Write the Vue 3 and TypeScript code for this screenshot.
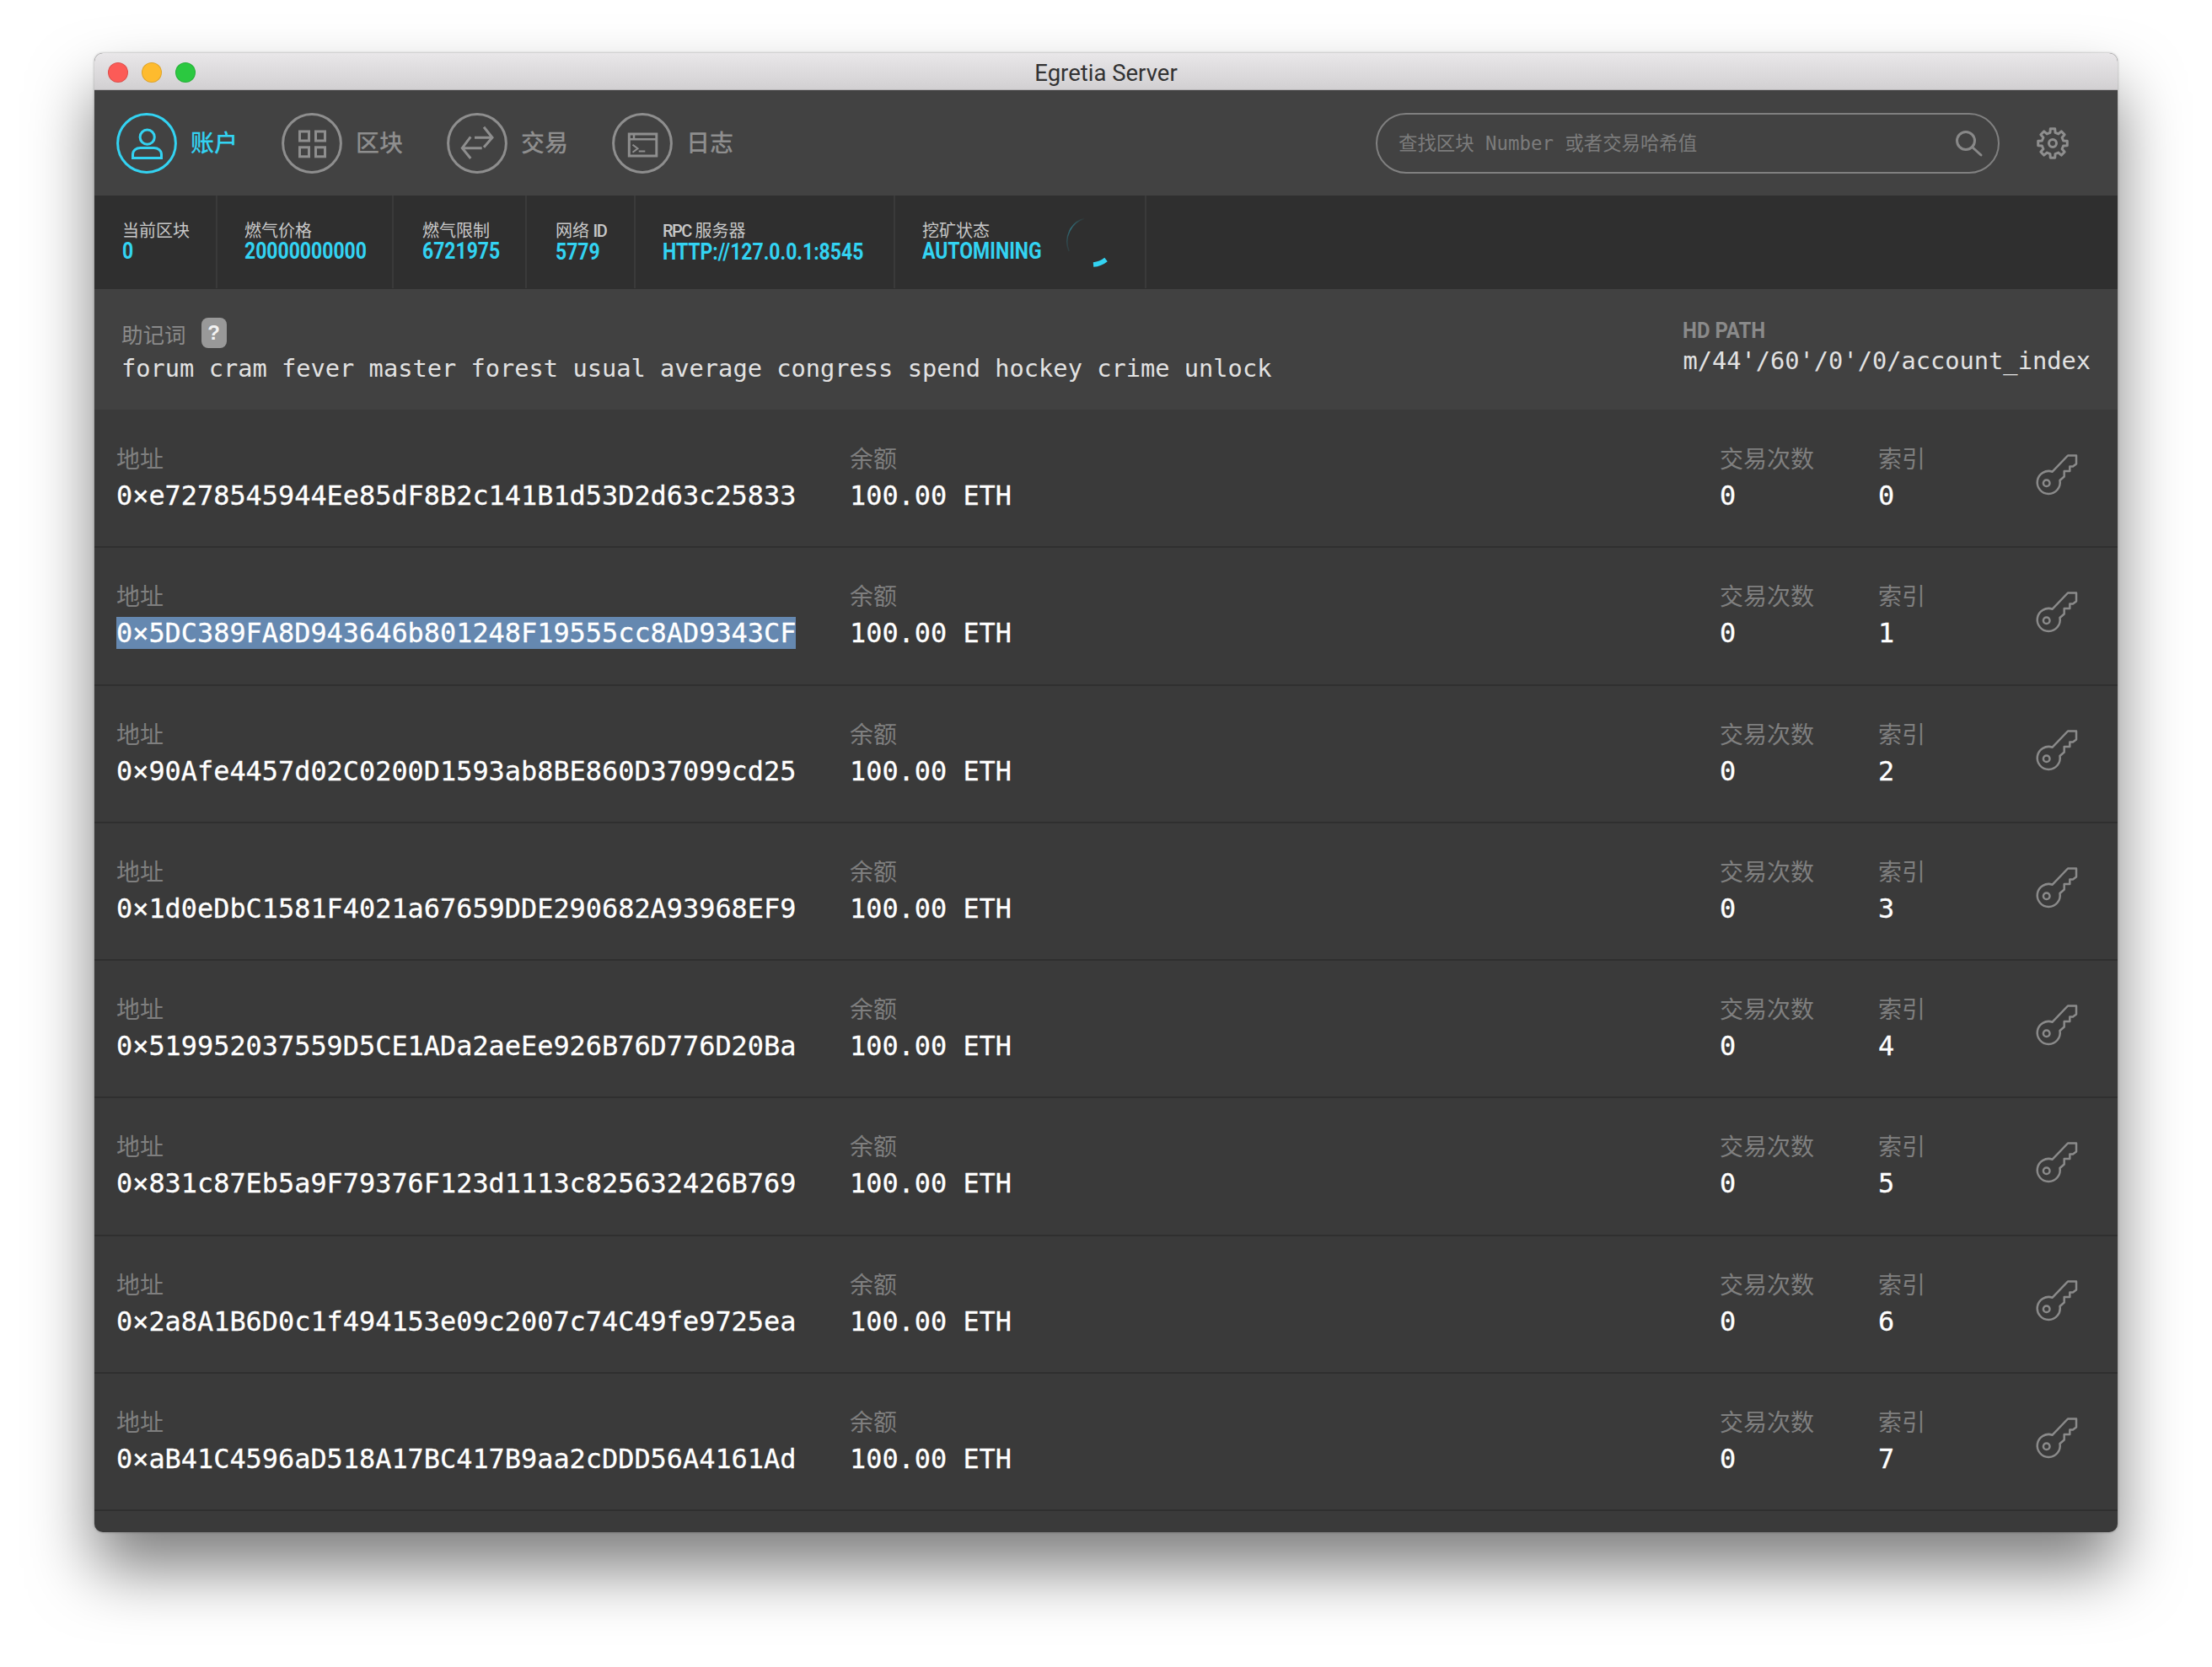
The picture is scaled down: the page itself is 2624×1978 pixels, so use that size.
<template>
  <div class="page">
    <div class="window">
      <div class="titlebar">
        <div class="lights">
          <span class="light red"></span>
          <span class="light yellow"></span>
          <span class="light green"></span>
        </div>
        <div class="title">Egretia Server</div>
      </div>

      <div class="toolbar">
        <nav class="nav">
          <a v-for="item in navItems" :key="item.label" class="nav-item" :class="{ active: item.active }">
            <svg class="nav-icon" viewBox="0 0 72 72" fill="none" stroke="currentColor" stroke-width="3">
              <circle cx="36" cy="36" r="34.400" />
              <template v-if="item.icon === 'user'">
                <circle cx="36.700" cy="28.700" r="8.600" />
                <path d="M19.500 53.500v-4c0-5 4-8 9-8h16c5 0 9 3 9 8v4z" />
              </template>
              <template v-else-if="item.icon === 'grid'">
                <rect x="21.500" y="22" width="11" height="11" />
                <rect x="40.500" y="22" width="11" height="11" />
                <rect x="21.500" y="40.800" width="11" height="11" />
                <rect x="40.500" y="40.800" width="11" height="11" />
              </template>
              <template v-else-if="item.icon === 'swap'">
                <path d="M33 29.300h21M44 16.700l10 12.600-10 11.400" />
                <path d="M41.700 41.700H18.300M28.300 28.300l-10 13.400 10 12.300" />
              </template>
              <template v-else>
                <rect x="20.300" y="25" width="32.500" height="26" stroke-width="3" />
                <path d="M20.300 31.300h32.500M26 25v6.300" stroke-width="2.500" />
                <path d="M24.500 37.700l6 4.500-6 4.500M31.700 45.500h7.600" stroke-width="2" />
              </template>
            </svg>
            <span class="nav-label">{{ item.label }}</span>
          </a>
        </nav>
        <div class="search">
          <input class="search-input" placeholder="查找区块 Number 或者交易哈希值" />
          <svg class="search-icon" viewBox="0 0 36 36" fill="none" stroke="currentColor" stroke-width="3">
            <circle cx="14" cy="14" r="10.500" />
            <path d="M21.500 21.500L32 31" stroke-linecap="round" />
          </svg>
        </div>
        <svg class="gear" viewBox="0 0 40 40" fill="none" stroke="currentColor" stroke-width="3">
          <path :d="gearPath" stroke-linejoin="round" />
          <circle cx="20" cy="20" r="4.500" />
        </svg>
      </div>

      <div class="stats">
        <div v-for="stat in stats" :key="stat.label" class="stat">
          <div class="stat-text">
            <div class="stat-label">
              <span v-for="part in labelParts(stat.label)" :key="part" :class="{ latin: isLatin(part) }">{{ part }}</span>
            </div>
            <div class="stat-value">{{ stat.value }}</div>
          </div>
          <svg v-if="stat.spinner" class="spinner" viewBox="0 0 64 64" fill="none">
            <defs>
              <linearGradient id="spin-fade" x1="0" y1="1" x2="1" y2="0">
                <stop offset="0" stop-color="#33d3f2" stop-opacity="0.05" />
                <stop offset="0.45" stop-color="#33d3f2" stop-opacity="0.4" />
                <stop offset="1" stop-color="#33d3f2" stop-opacity="0" />
              </linearGradient>
            </defs>
            <path d="M5 43A29 29 0 0 1 24 4" stroke="url(#spin-fade)" stroke-width="1.500" />
            <path d="M34 59A27 27 0 0 0 49 53" stroke="#33d3f2" stroke-width="5.500" />
          </svg>
        </div>
      </div>

      <div class="mnemonic">
        <div class="mnemonic-left">
          <div class="mnemonic-label">
            <span>助记词</span>
            <span class="help">?</span>
          </div>
          <div class="mono-line">forum cram fever master forest usual average congress spend hockey crime unlock</div>
        </div>
        <div class="mnemonic-right">
          <div class="hd-label">HD PATH</div>
          <div class="mono-line path-line">m/44'/60'/0'/0/account_index</div>
        </div>
      </div>

      <div class="accounts">
        <div v-for="(address, index) in addresses" :key="address" class="account">
          <div class="cell">
            <div class="cell-label">地址</div>
            <div class="cell-value"><span :class="{ selected: index === 1 }">{{ address }}</span></div>
          </div>
          <div class="cell">
            <div class="cell-label">余额</div>
            <div class="cell-value">100.00 ETH</div>
          </div>
          <div class="cell">
            <div class="cell-label">交易次数</div>
            <div class="cell-value">0</div>
          </div>
          <div class="cell">
            <div class="cell-label">索引</div>
            <div class="cell-value">{{ index }}</div>
          </div>
          <svg class="key" viewBox="0 0 48 48" fill="none" stroke="currentColor" stroke-width="2.500">
            <path d="M17.700 20.700L36 1.500h10v10l-4 3h-3.700V20h-6.600v6.500l-5.200 4.500A13.500 13.500 0 1 1 17.700 20.700z" stroke-linejoin="round" />
            <circle cx="10.700" cy="34.300" r="3.800" />
          </svg>
        </div>
      </div>
    </div>
  </div>
</template>

<script setup lang="ts">
interface NavItem {
  label: string
  icon: 'user' | 'grid' | 'swap' | 'log'
  active?: boolean
}

interface Stat {
  label: string
  value: string
  spinner?: boolean
}

const navItems: NavItem[] = [
  { label: '账户', icon: 'user', active: true },
  { label: '区块', icon: 'grid' },
  { label: '交易', icon: 'swap' },
  { label: '日志', icon: 'log' }
]

const stats: Stat[] = [
  { label: '当前区块', value: '0' },
  { label: '燃气价格', value: '20000000000' },
  { label: '燃气限制', value: '6721975' },
  { label: '网络 ID', value: '5779' },
  { label: 'RPC 服务器', value: 'HTTP://127.0.0.1:8545' },
  { label: '挖矿状态', value: 'AUTOMINING', spinner: true }
]

const addresses = [
  '0×e7278545944Ee85dF8B2c141B1d53D2d63c25833',
  '0×5DC389FA8D943646b801248F19555cc8AD9343CF',
  '0×90Afe4457d02C0200D1593ab8BE860D37099cd25',
  '0×1d0eDbC1581F4021a67659DDE290682A93968EF9',
  '0×519952037559D5CE1ADa2aeEe926B76D776D20Ba',
  '0×831c87Eb5a9F79376F123d1113c825632426B769',
  '0×2a8A1B6D0c1f494153e09c2007c74C49fe9725ea',
  '0×aB41C4596aD518A17BC417B9aa2cDDD56A4161Ad'
]

const isLatin = (part: string) => /^[A-Za-z]+$/.test(part)

// latin bits of a label get the tighter setting
const labelParts = (label: string) => label.split(/([A-Za-z]+)/).filter(Boolean)

// eight tooth cog outline around the centre of a 40 box
const gearPath = (() => {
  const teeth = 8
  const outer = 17.5
  const inner = 13
  const points: string[] = []
  for (let i = 0; i < teeth; i++) {
    const a = (i / teeth) * Math.PI * 2 - Math.PI / 2
    const step = (Math.PI * 2) / teeth
    const corners: [number, number][] = [
      [inner, a - step * 0.3],
      [outer, a - step * 0.2],
      [outer, a + step * 0.2],
      [inner, a + step * 0.3]
    ]
    for (const [r, t] of corners) {
      points.push(`${(20 + r * Math.cos(t)).toFixed(2)} ${(20 + r * Math.sin(t)).toFixed(2)}`)
    }
  }
  return `M${points.join('L')}Z`
})()
</script>

<style scoped>
.page {
  height: 1978px;
  padding: 63px 112px 0;
  box-sizing: border-box;
  overflow: hidden;
  background: #fff;
  font-family: "Noto Sans CJK SC", sans-serif;
}

.window {
  height: 1755px;
  border-radius: 10px;
  overflow: hidden;
  background: #3a3a3a;
  box-shadow: 0 44px 76px rgba(0, 0, 0, 0.5), 0 0 3px rgba(0, 0, 0, 0.35);
}

.titlebar {
  position: relative;
  height: 44px;
  padding-top: 3px;
  display: flex;
  align-items: center;
  justify-content: center;
  background: linear-gradient(#e9e7e9, #d2d0d2);
  border-bottom: 1px solid #b4b2b4;
  box-sizing: border-box;
}

.lights {
  position: absolute;
  left: 16px;
  top: 11px;
  display: flex;
  gap: 16px;
}

.light {
  width: 24px;
  height: 24px;
  border-radius: 50%;
  box-sizing: border-box;
  border: 1px solid rgba(0, 0, 0, 0.12);
}

.red { background: #fc5b57; }
.yellow { background: #febb2e; }
.green { background: #2bc840; }

.title {
  font-family: Roboto, "Liberation Sans", sans-serif;
  font-size: 27.500px;
  color: #333;
}

.toolbar {
  height: 125px;
  display: flex;
  align-items: center;
  padding: 0 57px 0 26px;
  background: #424242;
}

.nav {
  display: flex;
  gap: 52px;
}

.nav-item {
  display: flex;
  align-items: center;
  gap: 16px;
  color: #8e8e8e;
}

.nav-item.active {
  color: #33d3f2;
}

.nav-icon {
  width: 72px;
  height: 72px;
  display: block;
}

.nav-label {
  font-size: 28px;
  font-weight: 500;
  line-height: 40px;
  margin-top: -3px;
}

.search {
  position: relative;
  margin-left: auto;
  width: 740px;
  height: 72px;
  box-sizing: border-box;
  border: 2px solid #808080;
  border-radius: 36px;
  display: flex;
  align-items: center;
  padding: 0 70px 0 25px;
}

.search-input {
  flex: 1;
  min-width: 0;
  border: 0;
  outline: 0;
  padding: 0;
  background: transparent;
  font-family: "DejaVu Sans Mono", "Noto Sans CJK SC", monospace;
  font-size: 22.400px;
  color: #ddd;
}

.search-input::placeholder {
  color: #7c7c7c;
  opacity: 1;
}

.search-icon {
  position: absolute;
  right: 16px;
  top: 17px;
  width: 36px;
  height: 36px;
  color: #888;
}

.gear {
  width: 40px;
  height: 40px;
  margin-left: 43px;
  color: #8e8e8e;
}

.stats {
  height: 111px;
  display: grid;
  grid-template-columns: 146px 209px 158px 129px 308px 298px;
  background: #2f2f2f;
  padding-bottom: 1px;
  box-sizing: border-box;
}

.stat {
  display: flex;
  align-items: center;
  padding-left: 32px;
  border-right: 2px solid #3a3a3a;
}

.stat:first-child {
  padding-left: 33px;
}

.stat:nth-child(3),
.stat:nth-child(4) {
  padding-left: 34px;
}

.stat-text {
  flex: none;
  width: 140px;
  white-space: nowrap;
}

.stat-label {
  font-size: 20px;
  line-height: 22px;
  margin-bottom: 1px;
  color: #c8c8c8;
}

.latin {
  font-family: Roboto, sans-serif;
  font-weight: 500;
  letter-spacing: -1.500px;
}

.stat-value {
  display: inline-block;
  font-family: Roboto, sans-serif;
  font-weight: 700;
  font-size: 28px;
  line-height: 26px;
  color: #33d3f2;
  transform: scaleX(0.82);
  transform-origin: left center;
}

.spinner {
  width: 64px;
  height: 64px;
  flex: none;
  margin-left: 29px;
}

.mnemonic {
  height: 143px;
  display: flex;
  justify-content: space-between;
  background: #414141;
  padding: 0 32px;
  box-sizing: border-box;
}

.mnemonic-left {
  padding-top: 34px;
}

.mnemonic-right {
  padding-top: 34px;
}

.mnemonic-label {
  display: flex;
  align-items: center;
  gap: 18px;
  height: 36px;
  font-size: 25.500px;
  color: #8a8a8a;
}

.help {
  width: 30px;
  height: 36px;
  border-radius: 8px;
  background: #999;
  color: #f2f2f2;
  font-family: "Liberation Sans", sans-serif;
  font-weight: 700;
  font-size: 24px;
  line-height: 36px;
  text-align: center;
}

.mono-line {
  font-family: "DejaVu Sans Mono", monospace;
  font-size: 28.700px;
  line-height: 38px;
  margin-top: 5px;
  color: #e2e2e2;
}

.path-line {
  margin-top: 2px;
}

.hd-label {
  display: inline-block;
  font-family: Roboto, sans-serif;
  font-weight: 700;
  font-size: 26px;
  line-height: 30px;
  color: #8a8a8a;
  transform: scaleX(0.92);
  transform-origin: left center;
}

.accounts {
  padding-top: 1px;
}

.account {
  height: 163.300px;
  box-sizing: border-box;
  display: grid;
  grid-template-columns: 870px 1032px 188px 189px auto;
  align-items: start;
  padding: 36px 0 0 26px;
  border-bottom: 2px solid #2f2f2f;
}

.cell-label {
  font-size: 28px;
  line-height: 40px;
  color: #7f7f7f;
}

.cell-value {
  font-family: "DejaVu Sans Mono", monospace;
  font-size: 31.900px;
  line-height: 38px;
  margin-top: 6px;
  color: #fff;
  -webkit-text-stroke: 0.3px #fff;
}

.selected {
  background: #6588b0;
  display: inline-block;
}

.key {
  width: 48px;
  height: 48px;
  margin-top: 16px;
  overflow: visible;
  color: #8a8a8a;
}
</style>

<style>
html,
body {
  margin: 0;
  background: #fff;
}
</style>
